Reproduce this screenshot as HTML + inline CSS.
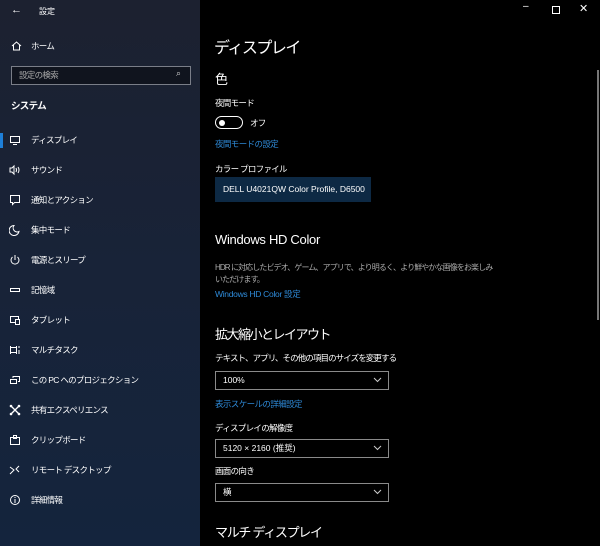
<!DOCTYPE html>
<html><head><meta charset="utf-8"><style>
*{margin:0;padding:0;box-sizing:border-box}
body{width:600px;height:546px;overflow:hidden;background:#000;font-family:"Liberation Sans","Noto Sans CJK JP",sans-serif;color:#fff;position:relative}
.side{position:absolute;left:0;top:0;width:200px;height:546px;background:linear-gradient(180deg,#1c2130 0%,#182338 50%,#14243d 100%)}
.a{position:absolute;white-space:nowrap}
.j{letter-spacing:-0.7px}
.it{position:absolute;left:0;width:200px;height:20px;font-size:8.5px;line-height:20px;letter-spacing:-0.7px}
.it svg{position:absolute;left:9px;top:4px}
.it span{position:absolute;left:31px}
.lnk{color:#2e8ad8;font-size:8.5px;letter-spacing:-0.6px}
.dd{position:absolute;left:215px;width:174px;height:19px;border:1px solid #8a8a8a;font-size:8.5px;line-height:17px;padding-left:7px}
.dd svg{position:absolute;right:6px;top:5px}
</style></head><body>
<div class="side">
<div class="a" style="left:11px;top:4px;font-size:11px">←</div>
<div class="a" style="left:39px;top:6px;font-size:8px">設定</div>
<svg class="a" style="left:11px;top:41px" width="11" height="10" viewBox="0 0 11 10"><path d="M1 5L5.5 1 10 5M2.5 4v5h6V4" fill="none" stroke="#fff" stroke-width="1"/></svg>
<div class="a j" style="left:31px;top:40px;font-size:8.5px">ホーム</div>
<div class="a" style="left:11px;top:66px;width:180px;height:19px;border:1px solid #7a7e88;background:#10141e"></div>
<div class="a j" style="left:19px;top:69px;font-size:8.5px;color:#aaa">設定の検索</div>
<div class="a" style="left:176px;top:68px;font-size:9px;color:#ccc">⌕</div>
<div class="a j" style="left:11px;top:98px;font-size:9.5px;font-weight:bold">システム</div>
<div class="a" style="left:0;top:133px;width:3px;height:15px;background:#1e7fd8"></div>
<div class="it" style="top:130px"><svg width="12" height="12"><rect x="1.5" y="2.5" width="9" height="6" fill="none" stroke="#fff"/><path d="M4 10.5h4" stroke="#fff"/></svg><span>ディスプレイ</span></div>
<div class="it" style="top:160px"><svg width="12" height="12"><path d="M1 4h2l2-2v8L3 8H1z" fill="none" stroke="#fff"/><path d="M7 4q1 2 0 4M9 3q2 3 0 6" fill="none" stroke="#fff"/></svg><span>サウンド</span></div>
<div class="it" style="top:190px"><svg width="12" height="12"><path d="M1.5 1.5h9v7h-5l-2 2v-2h-2z" fill="none" stroke="#fff"/></svg><span>通知とアクション</span></div>
<div class="it" style="top:220px"><svg width="12" height="12"><path d="M5 1.5a5 5 0 1 0 5 6a4 4 0 0 1-5-6z" fill="none" stroke="#fff"/></svg><span>集中モード</span></div>
<div class="it" style="top:250px"><svg width="12" height="12"><path d="M3.5 3a4 4 0 1 0 5 0M6 1v5" fill="none" stroke="#fff"/></svg><span>電源とスリープ</span></div>
<div class="it" style="top:280px"><svg width="12" height="12"><rect x="1.5" y="4.5" width="9" height="3" fill="none" stroke="#fff"/></svg><span>記憶域</span></div>
<div class="it" style="top:310px"><svg width="12" height="12"><rect x="1.5" y="2.5" width="8" height="6" fill="none" stroke="#fff"/><rect x="6.5" y="5.5" width="4" height="5" fill="#182338" stroke="#fff"/></svg><span>タブレット</span></div>
<div class="it" style="top:340px"><svg width="12" height="12"><path d="M1.5 2v8M7.5 2v8M1.5 3.5h6M1.5 8.5h6M10 2v2M10 6v4" fill="none" stroke="#fff"/></svg><span>マルチタスク</span></div>
<div class="it" style="top:370px"><svg width="12" height="12"><rect x="1.5" y="5.5" width="6" height="4" fill="none" stroke="#fff"/><path d="M4 4V2.5h6.5v5H9" fill="none" stroke="#fff"/></svg><span>この PC へのプロジェクション</span></div>
<div class="it" style="top:400px"><svg width="12" height="12"><path d="M2 2l8 8M10 2l-8 8" stroke="#fff" stroke-width="1.3"/><circle cx="2" cy="2" r="1.3" fill="#fff"/><circle cx="10" cy="2" r="1.3" fill="#fff"/><circle cx="2" cy="10" r="1.3" fill="#fff"/><circle cx="10" cy="10" r="1.3" fill="#fff"/></svg><span>共有エクスペリエンス</span></div>
<div class="it" style="top:430px"><svg width="12" height="12"><rect x="1.5" y="3.5" width="9" height="7" fill="none" stroke="#fff"/><rect x="4.5" y="1.5" width="3" height="3" fill="none" stroke="#fff"/></svg><span>クリップボード</span></div>
<div class="it" style="top:460px"><svg width="12" height="12"><path d="M1 3l4 3-4 4M10 2L7 5l3 3" fill="none" stroke="#fff"/></svg><span>リモート デスクトップ</span></div>
<div class="it" style="top:490px"><svg width="12" height="12"><circle cx="6" cy="6" r="4.5" fill="none" stroke="#fff"/><path d="M6 5v4M6 3v1" stroke="#fff"/></svg><span>詳細情報</span></div>
</div>
<div class="a" style="left:523px;top:1px;font-size:10px">–</div>
<div class="a" style="left:552px;top:6px;width:8px;height:8px;border:1px solid #fff"></div>
<div class="a" style="left:579px;top:2px;font-size:11px">✕</div>
<div class="a" style="left:597px;top:70px;width:2px;height:250px;background:#777"></div>

<div class="a" style="left:214px;top:34px;font-size:16px;letter-spacing:-1.5px">ディスプレイ</div>
<div class="a" style="left:215px;top:69px;font-size:13px">色</div>
<div class="a j" style="left:215px;top:97px;font-size:8.5px">夜間モード</div>
<div class="a" style="left:215px;top:116px;width:28px;height:13px;border:1.5px solid #fff;border-radius:7px"></div>
<div class="a" style="left:219px;top:119.5px;width:6px;height:6px;border-radius:50%;background:#fff"></div>
<div class="a j" style="left:250px;top:117px;font-size:8.5px">オフ</div>
<div class="a lnk" style="left:215px;top:138px">夜間モードの設定</div>
<div class="a j" style="left:215px;top:163px;font-size:8.5px">カラー プロファイル</div>
<div class="a" style="left:215px;top:177px;width:156px;height:25px;background:#0d2944;font-size:8.5px;line-height:25px;padding-left:8px">DELL U4021QW Color Profile, D6500</div>
<div class="a" style="left:215px;top:232px;font-size:13px;letter-spacing:-0.3px">Windows HD Color</div>
<div class="a" style="left:215px;top:262px;font-size:8px;color:#aaa;line-height:12px;letter-spacing:-0.9px">HDR に対応したビデオ、ゲーム、アプリで、より明るく、より鮮やかな画像をお楽しみ<br>いただけます。</div>
<div class="a lnk" style="left:215px;top:288px;letter-spacing:-0.3px">Windows HD Color 設定</div>
<div class="a" style="left:215px;top:324px;font-size:13px;letter-spacing:-1.5px">拡大縮小とレイアウト</div>
<div class="a j" style="left:215px;top:352px;font-size:8.5px;letter-spacing:-0.9px">テキスト、アプリ、その他の項目のサイズを変更する</div>
<div class="dd" style="top:371px">100%<svg width="9" height="6"><path d="M1 1l3.5 3.5L8 1" fill="none" stroke="#ccc"/></svg></div>
<div class="a lnk" style="left:215px;top:398px">表示スケールの詳細設定</div>
<div class="a j" style="left:215px;top:422px;font-size:8.5px">ディスプレイの解像度</div>
<div class="dd" style="top:439px">5120 × 2160 (推奨)<svg width="9" height="6"><path d="M1 1l3.5 3.5L8 1" fill="none" stroke="#ccc"/></svg></div>
<div class="a j" style="left:215px;top:465px;font-size:8.5px">画面の向き</div>
<div class="dd" style="top:483px">横<svg width="9" height="6"><path d="M1 1l3.5 3.5L8 1" fill="none" stroke="#ccc"/></svg></div>
<div class="a" style="left:215px;top:522px;font-size:13px;letter-spacing:-1.3px">マルチ ディスプレイ</div>
</body></html>
